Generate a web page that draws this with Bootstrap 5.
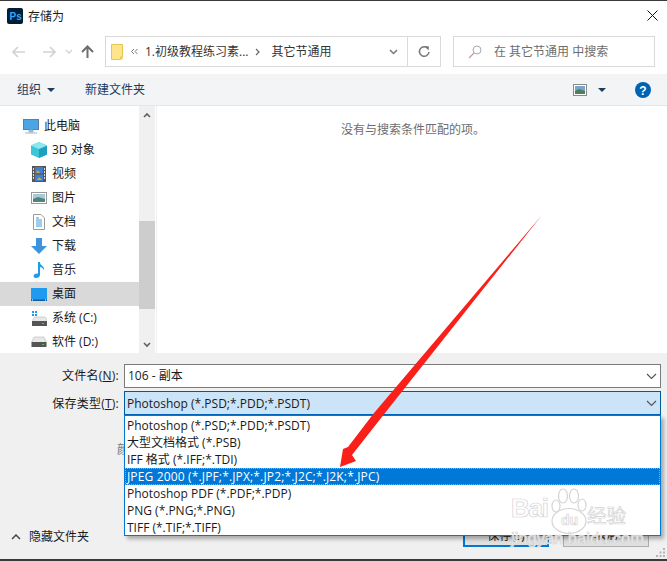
<!DOCTYPE html>
<html lang="zh"><head><meta charset="utf-8"><title>存储为</title>
<link href="https://cdn.jsdelivr.net/npm/bootstrap@5.3.0/dist/css/bootstrap.min.css" rel="stylesheet">
<style>
html,body{margin:0;height:561px;overflow:hidden;background:#fff}
body{font:12px/16px "Open Sans","Noto Sans CJK SC",sans-serif;color:#1a1a1a}
svg{display:block;flex:none}
.dlg{width:667px;height:561px;position:relative;overflow:hidden;border-top:1px solid #3a3a3a;border-bottom:2px solid #3c3a38}
.ttl{height:35px;padding:0 0 6px 7px;font-size:12px;flex:none;gap:5px}
.ttl .xbtn{margin-left:auto;margin-right:9px}
.ttxt{padding-top:2px}
.navr{height:31px;margin-bottom:7px;color:#333;flex:none}
.navi{width:105px;padding-left:12px}
.addr{width:336px;height:31px;border:1px solid #d9d9d9;padding-left:5px}
.addr .sep{margin-left:auto;width:33px;height:29px;border-left:1px solid #d9d9d9}
.srch{width:202px;height:31px;border:1px solid #d9d9d9;margin-left:12px;padding-left:14px;color:#6d6d6d}
.tbar{height:32px;background:#f3f4f6;border-bottom:1px solid #e5e5e5;color:#1e3a5f;padding-left:17px;flex:none}
.brow{height:247px;flex:none}
.side{width:139px;padding-top:8px;overflow:hidden}
.sit{height:24px;padding-left:31px;gap:5px;flex:none}
.sit.top{padding-left:23px}
.sit.cur{background:#d9d9d9}
.sbar{width:16px;background:#f0f0f0;position:relative}
.sthumb{position:absolute;left:0;right:0;top:115px;height:88px;background:#cdcdcd}
.mainp{border-left:1px solid #f0f0f0;margin-left:1px;padding-top:16px;padding-left:184px;color:#6d6d6d;flex:1}
.fpan{flex:1;background:#f0f0f0;padding-top:11px;position:relative;min-height:0}
.frow{height:24px;margin-bottom:3px}
.flab{width:119px;text-align:right;color:#1a1a1a;margin-right:5px;letter-spacing:.25px}
.flab.low{padding-top:1px}
.fbox{width:537px;height:100%;border:1px solid #7a7a7a;background:#fff;padding-left:3px;position:relative}
.fbox.sel{height:25px;background:#cce4f7;border:1px solid #005a9e;border-bottom:2px solid #0067c0;padding:2px 0 0 2px}
.chev{margin-left:auto;margin-right:3px}
.droplist{position:absolute;left:-1px;top:23px;width:537px;height:121px;background:#fff;border:1px solid #0078d7;box-shadow:3px 3px 4px rgba(0,0,0,.3);z-index:3;padding-top:1px}
.dit{height:17px;padding-left:2px;line-height:17px;white-space:nowrap}
.dit.on{background:#0078d7;color:#fff;outline:1px dotted #c9a66b;outline-offset:-1px;letter-spacing:.15px}
.ghost{position:absolute;left:117px;top:89px;color:#777}
.foot{position:absolute;left:0;right:0;top:173px;height:21px;padding-left:11px;gap:7px}
.wbtn{position:absolute;top:0;height:21px;width:86px;text-align:center;border:2px solid #0078d7;background:#e1e1e1;font-size:12px;line-height:16px;padding:0}
.wbtn.two{border:1px solid #adadad}
.grip{position:absolute;right:1px;bottom:1px}
.arrow{position:absolute;left:0;top:-1px;z-index:5;pointer-events:none}
.wm{position:absolute;z-index:6;color:#fff;-webkit-text-stroke:.7px #d4d4d4;font-family:"Liberation Sans",sans-serif;font-weight:700;white-space:nowrap}
.wm1{left:511px;top:490px;font-size:26px;line-height:34px;letter-spacing:-1.2px}
.wm2{left:587px;top:500px;font-size:19.5px;line-height:28px;font-family:"Noto Sans CJK SC",sans-serif;font-weight:400}
.wm3{left:511px;top:527px;font-size:16.5px;line-height:20px;font-weight:400;color:rgba(255,255,255,.85)}
.wmdu{left:561px;top:510px;font-size:14px;line-height:18px;color:#fff}
.wmpaw{position:absolute;left:550px;top:487px;z-index:6}
</style></head><body>
<div class="dlg d-flex flex-column">
 <div class="ttl d-flex align-items-center">
  <svg width="16" height="16"><rect width="16" height="16" rx="2" fill="#001e36"/><text x="2.500" y="12" font-size="10" font-weight="700" fill="#31a8ff" font-family="Liberation Sans">Ps</text></svg>
  <span class="ttxt">存储为</span>
  <svg class="xbtn" width="11" height="11"><path d="M.5.5l10 10M10.500.5l-10 10" stroke="#111" fill="none"/></svg>
 </div>
 <div class="navr d-flex align-items-center">
  <div class="navi d-flex align-items-center">
   <svg width="14" height="12"><path d="M1 6h12M6 1L1 6l5 5" stroke="#d2d2d2" stroke-width="1.600" fill="none"/></svg>
   <svg style="margin-left:16px" width="14" height="12"><path d="M1 6h12M8 1l5 5-5 5" stroke="#d2d2d2" stroke-width="1.600" fill="none"/></svg>
   <svg style="margin-left:9px" width="8" height="6"><path d="M1 1l3 3 3-3" stroke="#d2d2d2" stroke-width="1.300" fill="none"/></svg>
   <svg style="margin-left:8px" width="13" height="13"><path d="M6.500 13V2M1 7l5.500-5.500L12 7" stroke="#6e6e6e" stroke-width="2" fill="none"/></svg>
  </div>
  <div class="addr d-flex align-items-center">
   <svg width="12" height="16"><path d="M.5.500h11v12.500h-2v2.500h-9z" fill="#fde58d" stroke="#e8c44f"/><path d="M9.500 13h2v2.500h-2z" fill="#f2c94c"/></svg>
   <svg style="margin-left:7px" width="8" height="7"><path d="M4 1L1.500 3.500 4 6M7.500 1L5 3.500 7.500 6" stroke="#777" fill="none"/></svg>
   <span style="margin-left:7px">1.初级教程练习素...</span>
   <svg style="margin-left:7px" width="5" height="8"><path d="M1 1l3 3-3 3" stroke="#666" stroke-width="1.200" fill="none"/></svg>
   <span style="margin-left:11px">其它节通用</span>
   <svg class="chev" style="margin-right:9px" width="9" height="6"><path d="M1 1l3.500 3.500L8 1" stroke="#777" stroke-width="1.500" fill="none"/></svg>
   <div class="sep d-flex align-items-center justify-content-center" style="margin-left:0"><svg width="12" height="13"><path d="M10 3.500A4.800 4.800 0 1 0 11 7" stroke="#777" stroke-width="1.500" fill="none"/><path d="M7 1l4 .5-.5 4z" fill="#777"/></svg></div>
  </div>
  <div class="srch d-flex align-items-center">
   <svg width="14" height="14"><circle cx="9" cy="5" r="4" stroke="#a9a9a9" fill="none"/><path d="M6 8l-5 5" stroke="#c79a9a" stroke-width="1.200"/></svg>
   <span style="margin-left:12px">在 其它节通用 中搜索</span>
  </div>
 </div>
 <div class="tbar d-flex align-items-center">
  <span>组织</span>
  <svg style="margin-left:6px" width="8" height="4"><path d="M0 0h8L4 4z" fill="#1e3a5f"/></svg>
  <span style="margin-left:30px">新建文件夹</span>
  <svg class="ms-auto" width="14" height="12"><rect x=".5" y=".5" width="13" height="11" fill="#fff" stroke="#8a8a8a"/><rect x="2" y="2" width="10" height="8" fill="#7aa6c8"/><path d="M2 7l4-2 6 2v3H2z" fill="#4f7d5f"/></svg>
  <svg style="margin-left:11px" width="8" height="4"><path d="M0 0h8L4 4z" fill="#1e3a5f"/></svg>
  <svg style="margin-left:29px;margin-right:16px" width="16" height="16"><circle cx="8" cy="8" r="8" fill="#0063b1"/><text x="8" y="12.500" text-anchor="middle" font-size="12" font-weight="700" fill="#fff" font-family="Liberation Sans">?</text></svg>
 </div>
 <div class="brow d-flex">
  <div class="side d-flex flex-column">
   <div class="sit top d-flex align-items-center"><svg width="16" height="15"><rect x=".5" y=".5" width="15" height="10" fill="#49a5e6" stroke="#5b7f9c"/><path d="M6 11h4v2H6zM2 14h12" stroke="#9db6c9" fill="#9db6c9"/></svg><span>此电脑</span></div>
   <div class="sit d-flex align-items-center"><svg width="16" height="16"><path d="M8 0l8 3.500v9L8 16 0 12.500v-9z" fill="#3cc6d8"/><path d="M8 7l8-3.500v9L8 16z" fill="#1d9fc0"/><path d="M0 3.500L8 0l8 3.500L8 7z" fill="#8ce8ee"/></svg><span>3D 对象</span></div>
   <div class="sit d-flex align-items-center"><svg width="16" height="16"><rect x="1" width="14" height="16" fill="#555"/><rect x="4" y="1" width="8" height="6.500" fill="#3f7fd0"/><rect x="4" y="8.500" width="8" height="6.500" fill="#3f7fd0"/><path d="M5 7l2-3 2 3zM6 14l2-3 3 3z" fill="#d8a82e"/><path d="M2 2h1v2H2zm0 3h1v2H2zm0 3h1v2H2zm0 3h1v2H2zM13 2h1v2h-1zm0 3h1v2h-1zm0 3h1v2h-1zm0 3h1v2h-1z" fill="#ddd"/></svg><span>视频</span></div>
   <div class="sit d-flex align-items-center"><svg width="16" height="12"><rect x=".5" y=".5" width="15" height="11" fill="#fff" stroke="#9a9a9a"/><rect x="2" y="2" width="12" height="8" fill="#a9c8dc"/><path d="M2 7l5-2 7 2v3H2z" fill="#4f8576"/></svg><span>图片</span></div>
   <div class="sit d-flex align-items-center"><svg width="16" height="16"><path d="M2.500.500h7.500l3.500 3.500v11.500h-11z" fill="#fff" stroke="#9a9a9a"/><path d="M5 6h6M5 8h6M5 10h6M5 12h6M5 4h3" stroke="#3a9bdc"/></svg><span>文档</span></div>
   <div class="sit d-flex align-items-center"><svg width="16" height="16"><path d="M5 0h6v8h5l-8 8-8-8h5z" fill="#3d93dd"/></svg><span>下载</span></div>
   <div class="sit d-flex align-items-center"><svg width="16" height="16"><path d="M7 0h2c0 4 5 4 4 8-1-2-3-3-4-3v8c0 2-2 3-4 3-3 0-3-3-1-4 1-.7 2-.7 3-.3z" fill="#1f9be8"/></svg><span>音乐</span></div>
   <div class="sit cur d-flex align-items-center"><svg width="16" height="13"><rect width="16" height="13" fill="#1e9bf0"/><rect y="11.500" width="16" height="1.500" fill="#0f5f9f"/><path d="M1 12h1M14 12h1" stroke="#fff"/></svg><span>桌面</span></div>
   <div class="sit d-flex align-items-center"><svg width="16" height="15"><path d="M1 0h2v2H1zM4 0h2v2H4zM1 3h2v2H1zM4 3h2v2H4z" fill="#1e9bf0"/><path d="M2 8l2-2h10l2 2v4H2z" fill="#e8e8e8" stroke="#aaa" stroke-width=".5"/><rect x="1" y="10" width="15" height="5" fill="#555"/><rect x="11" y="12" width="2" height="1" fill="#3fd43f"/></svg><span>系统 (C:)</span></div>
   <div class="sit d-flex align-items-center"><svg width="16" height="12"><path d="M1 5l2-4h10l2 4v2H1z" fill="#e8e8e8" stroke="#aaa" stroke-width=".5"/><rect x=".5" y="6" width="15" height="5" fill="#555"/><rect x="11" y="8" width="2" height="1" fill="#3fd43f"/></svg><span>软件 (D:)</span></div>
  </div>
  <div class="sbar">
   <svg class="position-absolute" style="left:4px;top:6px" width="8" height="6"><path d="M1 5l3-3 3 3" stroke="#606060" stroke-width="1.600" fill="none"/></svg>
   <div class="sthumb"></div>
   <svg class="position-absolute" style="left:4px;top:236px" width="8" height="6"><path d="M1 1l3 3 3-3" stroke="#606060" stroke-width="1.600" fill="none"/></svg>
  </div>
  <div class="mainp">没有与搜索条件匹配的项。</div>
 </div>
 <div class="fpan">
  <div class="frow d-flex align-items-center">
   <div class="flab">文件名(<u>N</u>):</div>
   <div class="fbox d-flex align-items-center">106 - 副本<svg class="chev" width="11" height="7"><path d="M1 1l4.500 4.500L10 1" stroke="#555" stroke-width="1.200" fill="none"/></svg></div>
  </div>
  <div class="frow d-flex align-items-center">
   <div class="flab low">保存类型(<u>T</u>):</div>
   <div class="fbox sel d-flex align-items-center">Photoshop (*.PSD;*.PDD;*.PSDT)<svg class="chev" width="11" height="7"><path d="M1 1l4.500 4.500L10 1" stroke="#555" stroke-width="1.200" fill="none"/></svg>
    <div class="droplist">
     <div class="dit">Photoshop (*.PSD;*.PDD;*.PSDT)</div>
     <div class="dit">大型文档格式 (*.PSB)</div>
     <div class="dit">IFF 格式 (*.IFF;*.TDI)</div>
     <div class="dit on">JPEG 2000 (*.JPF;*.JPX;*.JP2;*.J2C;*.J2K;*.JPC)</div>
     <div class="dit">Photoshop PDF (*.PDF;*.PDP)</div>
     <div class="dit">PNG (*.PNG;*.PNG)</div>
     <div class="dit">TIFF (*.TIF;*.TIFF)</div>
    </div>
   </div>
  </div>
  <div class="ghost">颜</div>
  <div class="foot d-flex align-items-center">
   <svg width="10" height="7"><path d="M1 6l4-4 4 4" stroke="#444" stroke-width="1.500" fill="none"/></svg>
   <span style="margin-left:1px">隐藏文件夹</span>
   <div class="wbtn" style="left:463px">保存(S)</div>
   <div class="wbtn two" style="left:563px">取消</div>
  </div>
  <svg class="grip" width="10" height="10"><path d="M7 0h2v2H7zM3.500 3.500h2v2h-2zM7 3.500h2v2H7zM0 7h2v2H0zM3.500 7h2v2h-2zM7 7h2v2H7z" fill="#b5b5b5"/></svg>
 </div>
 <svg class="arrow" width="667" height="561"><polygon points="542,215 385,413 352,455 356,461 340,467 343,449 348,447 374,413" fill="#f9201a"/></svg>
 <svg class="wmpaw" width="40" height="48"><g fill="#fff" stroke="#d4d4d4" stroke-width="1.200"><ellipse cx="6" cy="18" rx="4" ry="6"/><ellipse cx="13" cy="8" rx="4.500" ry="7"/><ellipse cx="24" cy="8" rx="4.500" ry="7"/><ellipse cx="32" cy="17" rx="4" ry="6"/><ellipse cx="19" cy="33" rx="17" ry="12.500"/></g></svg>
 <div class="wm wm1">Bai</div>
 <div class="wm wmdu">du</div>
 <div class="wm wm2">经验</div>
 <div class="wm wm3">jingyan.baidu.com</div>
</div>
</body></html>
